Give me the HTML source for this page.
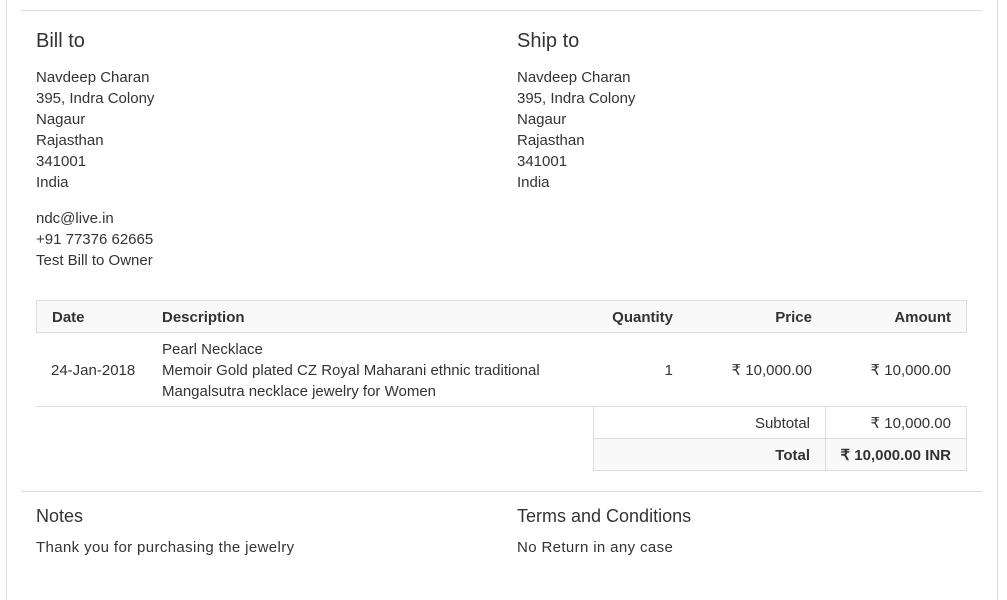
<!DOCTYPE html><html><head><style>
body{margin:0;width:1007px;height:579px;overflow:hidden;background:#fff;font-family:"Liberation Sans",sans-serif;color:#333;font-size:15px;position:relative}
.b{position:absolute;left:6px;top:0;width:990px;height:600px;border-left:1px solid #ddd;border-right:1px solid #ddd}
.hr{position:absolute;left:21px;width:961px;height:1px;background:#ddd}
h3{position:absolute;margin:0;font-size:20px;font-weight:normal;line-height:22px}
.t{position:absolute;line-height:21px}
.c{position:absolute;box-sizing:border-box}
b{font-weight:bold}
</style></head><body>
<div class="b"></div>
<div class="hr" style="top:10px"></div>
<h3 style="left:36px;top:30px">Bill to</h3>
<h3 style="left:517px;top:30px">Ship to</h3>
<div class="t" style="left:36px;top:67px">Navdeep Charan<br>395, Indra Colony<br>Nagaur<br>Rajasthan<br>341001<br>India</div>
<div class="t" style="left:517px;top:67px">Navdeep Charan<br>395, Indra Colony<br>Nagaur<br>Rajasthan<br>341001<br>India</div>
<div class="t" style="left:36px;top:208px">ndc@live.in<br>+91 77376 62665<br>Test Bill to Owner</div>
<div class="c" style="left:36px;top:300px;width:931px;height:33px;background:#f9f9f9;border:1px solid #ddd"></div>
<div class="t" style="left:52px;top:307px"><b>Date</b></div>
<div class="t" style="left:162px;top:307px"><b>Description</b></div>
<div class="t" style="right:334px;top:307px"><b>Quantity</b></div>
<div class="t" style="right:195px;top:307px"><b>Price</b></div>
<div class="t" style="right:56px;top:307px"><b>Amount</b></div>
<div class="t" style="left:51px;top:360px">24-Jan-2018</div>
<div class="t" style="left:162px;top:339px">Pearl Necklace<br>Memoir Gold plated CZ Royal Maharani ethnic traditional<br>Mangalsutra necklace jewelry for Women</div>
<div class="t" style="right:334px;top:360px">1</div>
<div class="t" style="right:195px;top:360px">₹ 10,000.00</div>
<div class="t" style="right:56px;top:360px">₹ 10,000.00</div>
<div class="c" style="left:36px;top:406px;width:931px;height:1px;background:#ddd"></div>
<div class="c" style="left:593px;top:406px;width:374px;height:65px;border:1px solid #ddd;border-top:none"></div>
<div class="c" style="left:594px;top:438px;width:372px;height:32px;background:#f9f9f9;border-top:1px solid #ddd"></div>
<div class="c" style="left:825px;top:406px;width:1px;height:64px;background:#ddd"></div>
<div class="t" style="right:197px;top:413px">Subtotal</div>
<div class="t" style="right:56px;top:413px">₹ 10,000.00</div>
<div class="t" style="right:197px;top:445px"><b>Total</b></div>
<div class="t" style="right:56px;top:445px"><b>₹ 10,000.00 INR</b></div>
<div class="hr" style="top:491px"></div>
<h3 style="left:36px;top:505px;font-size:18px">Notes</h3>
<h3 style="left:517px;top:505px;font-size:18px">Terms and Conditions</h3>
<div class="t" style="left:36px;top:537px;letter-spacing:0.37px">Thank you for purchasing the jewelry</div>
<div class="t" style="left:517px;top:537px;letter-spacing:0.37px">No Return in any case</div>
</body></html>
